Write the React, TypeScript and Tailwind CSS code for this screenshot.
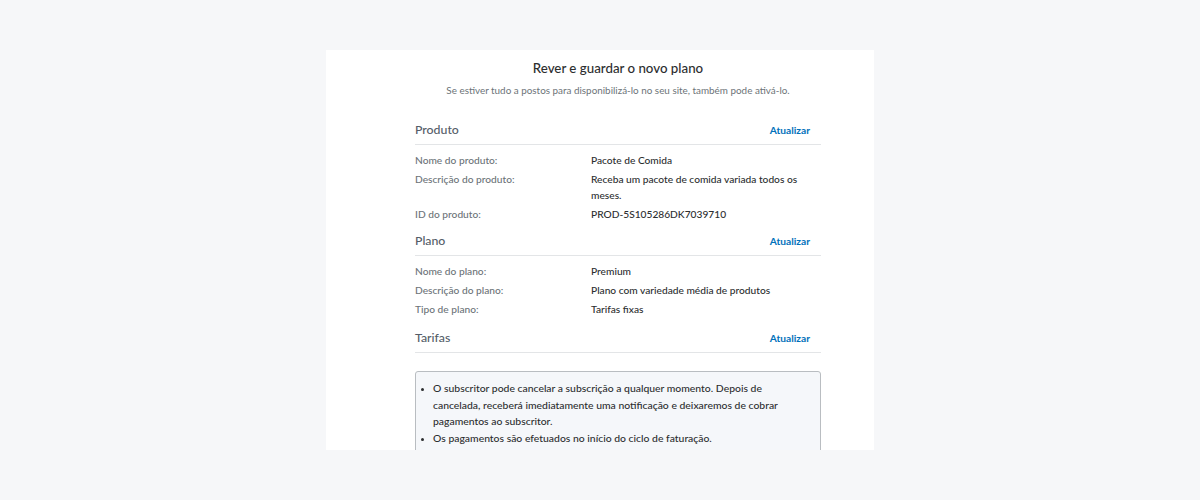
import React from 'react'

type Row = { label: string; value: string }

const sections: { title: string; rows: Row[] }[] = [
  {
    title: 'Produto',
    rows: [
      { label: 'Nome do produto:', value: 'Pacote de Comida' },
      { label: 'Descrição do produto:', value: 'Receba um pacote de comida variada todos os meses.' },
      { label: 'ID do produto:', value: 'PROD-5S105286DK7039710' },
    ],
  },
  {
    title: 'Plano',
    rows: [
      { label: 'Nome do plano:', value: 'Premium' },
      { label: 'Descrição do plano:', value: 'Plano com variedade média de produtos' },
      { label: 'Tipo de plano:', value: 'Tarifas fixas' },
    ],
  },
]

function SectionHeader({ title }: { title: string }) {
  return (
    <div className="flex items-end justify-between border-b border-[#e3e5e7] pb-[4px]">
      <h2 className="text-[12.3px] font-medium leading-[20px] text-[#545d68]">{title}</h2>
      <a href="#" className="mb-[2px] mr-[11px] text-[10.2px] font-bold leading-[16px] text-[#0070ba]">
        Atualizar
      </a>
    </div>
  )
}

export default function App() {
  return (
    <div
      className="min-h-[500px] bg-[#f6f7f9] pt-[50px]"
      style={{ fontFamily: 'Lato, "Open Sans", sans-serif' }}
    >
      <div className="mx-auto h-[400px] w-[548px] overflow-hidden bg-white">
        <div className="pl-[89px] pr-[53px]">
          {/* heading, centred over the content column */}
          <div className="pt-[8px] text-center">
            <h1 className="text-[13.3px] font-medium leading-[20px] text-[#2c2e2f]">
              Rever e guardar o novo plano
            </h1>
            <p className="mt-[4px] whitespace-nowrap text-[9.9px] leading-[16px] text-[#6c7378]">
              Se estiver tudo a postos para disponibilizá-lo no seu site, também pode ativá-lo.
            </p>
          </div>

          {sections.map((s, i) => (
            <section key={s.title} className={i === 0 ? 'mt-[22px]' : 'mt-[9px]'}>
              <SectionHeader title={s.title} />
              <dl className="mt-[7px] flex flex-col gap-[3px]">
                {s.rows.map((r) => (
                  <div key={r.label} className="flex text-[10.2px] font-medium leading-[16px]">
                    <dt className="w-[176px] shrink-0 text-[#6c7378]">{r.label}</dt>
                    <dd className="w-[215px] text-[#2c2e2f]">{r.value}</dd>
                  </div>
                ))}
              </dl>
            </section>
          ))}

          <section className="mt-[11px]">
            <SectionHeader title="Tarifas" />
            <div className="mt-[18px] rounded-[3px] border border-[#b9bdc1] bg-[#f5f7fa] pb-[10px] pl-[9px] pr-[20px] pt-[8px]">
              <ul className="list-disc pl-[8px] text-[10.4px] font-medium leading-[16.5px] text-[#2c2e2f] marker:text-[8px]">
                <li>
                  O subscritor pode cancelar a subscrição a qualquer momento. Depois de cancelada, receberá
                  imediatamente uma notificação e deixaremos de cobrar pagamentos ao subscritor.
                </li>
                <li>Os pagamentos são efetuados no início do ciclo de faturação.</li>
              </ul>
            </div>
          </section>
        </div>
      </div>
    </div>
  )
}
